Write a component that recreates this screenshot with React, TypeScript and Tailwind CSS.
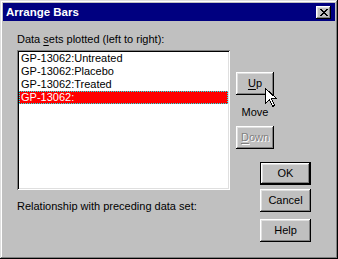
const font = "font-['Liberation_Sans',Arial,sans-serif]"

const raised =
  'shadow-[inset_-1px_-1px_#000,inset_1px_1px_#fff,inset_-2px_-2px_#808080,inset_2px_2px_#dfdfdf]'
const raisedDefault =
  'shadow-[inset_0_0_0_1px_#000,inset_-2px_-2px_#000,inset_2px_2px_#fff,inset_-3px_-3px_#808080,inset_3px_3px_#dfdfdf]'

const items = ['GP-13062:Untreated', 'GP-13062:Placebo', 'GP-13062:Treated', 'GP-13062:']

function Button({ children, w, disabled, isDefault }: { children: React.ReactNode; w: string; disabled?: boolean; isDefault?: boolean }) {
  return (
    <div
      className={`${w} h-[23px] flex items-center justify-center bg-[#c0c0c0] text-[11px] leading-[13px] ${
        isDefault ? raisedDefault : raised
      } ${disabled ? 'text-[#808080] [text-shadow:1px_1px_#fff]' : 'text-black'}`}
    >
      {children}
    </div>
  )
}

export default function App() {
  return (
    <div
      className={`relative w-[338px] h-[259px] bg-[#c0c0c0] p-[3px] flex flex-col ${font} shadow-[inset_-1px_-1px_#000,inset_1px_1px_#dfdfdf,inset_-2px_-2px_#808080,inset_2px_2px_#fff]`}
    >
      <div className="h-[18px] bg-[#000080] flex items-center justify-between pl-[3px] pr-[4px]">
        <span className="text-white font-bold text-[11.5px] leading-[13px]">Arrange Bars</span>
        <div className={`w-[15px] h-[13px] bg-[#c0c0c0] flex items-center justify-center ${raised}`}>
          <svg width="8" height="7" viewBox="0 0 8 7" shapeRendering="crispEdges">
            <path d="M0 0h2v1h-2zM6 0h2v1h-2zM1 1h2v1h-2zM5 1h2v1h-2zM2 2h4v1h-4zM3 3h2v1h-2zM2 4h4v1h-4zM1 5h2v1h-2zM5 5h2v1h-2zM0 6h2v1h-2zM6 6h2v1h-2z" fill="#000" />
          </svg>
        </div>
      </div>

      <div className="flex-1 flex text-[11px] leading-[13px] text-black">
        <div className="pl-[14px] pt-[12px] flex flex-col">
          <div>
            Data <span className="underline underline-offset-2">s</span>ets plotted (left to right):
          </div>
          <div className="mt-[4px] w-[213px] h-[140px] bg-white p-[2px] shadow-[inset_1px_1px_#808080,inset_-1px_-1px_#fff,inset_2px_2px_#000,inset_-2px_-2px_#dfdfdf]">
            {items.map((it, i) => (
              <div
                key={it}
                className={`h-[13px] pl-[2px] whitespace-nowrap ${
                  i === 3 ? 'bg-[#ff0000] text-white outline outline-1 outline-dotted outline-[#00ffff] -outline-offset-1' : ''
                }`}
              >
                {it}
              </div>
            ))}
          </div>
          <div className="mt-[10px]">Relationship with preceding data set:</div>
        </div>

        <div className="ml-[6px] w-[75px] pt-[51px] flex flex-col">
          <Button w="w-[38px]">
            <span><span className="underline underline-offset-2">U</span>p</span>
          </Button>
          <div className="w-[38px] mt-[11px] text-center">Move</div>
          <div className="mt-[7px]">
            <Button w="w-[38px]" disabled>
              <span><span className="underline underline-offset-2">D</span>own</span>
            </Button>
          </div>
          <div className="mt-[13px] self-end">
            <Button w="w-[51px]" isDefault>OK</Button>
          </div>
          <div className="mt-[4px] self-end">
            <Button w="w-[51px]">Cancel</Button>
          </div>
          <div className="mt-[7px] self-end">
            <Button w="w-[51px]">Help</Button>
          </div>
        </div>
      </div>

      <svg className="absolute left-[265px] top-[88px]" width="12" height="19" viewBox="0 0 12 19" shapeRendering="crispEdges">
        <path d="M0.5 0.5V15.5L4.5 11.5L7.5 18.5L9.5 17.5L6.5 10.5H11.5Z" fill="#fff" stroke="#000" strokeWidth="1" />
      </svg>
    </div>
  )
}
